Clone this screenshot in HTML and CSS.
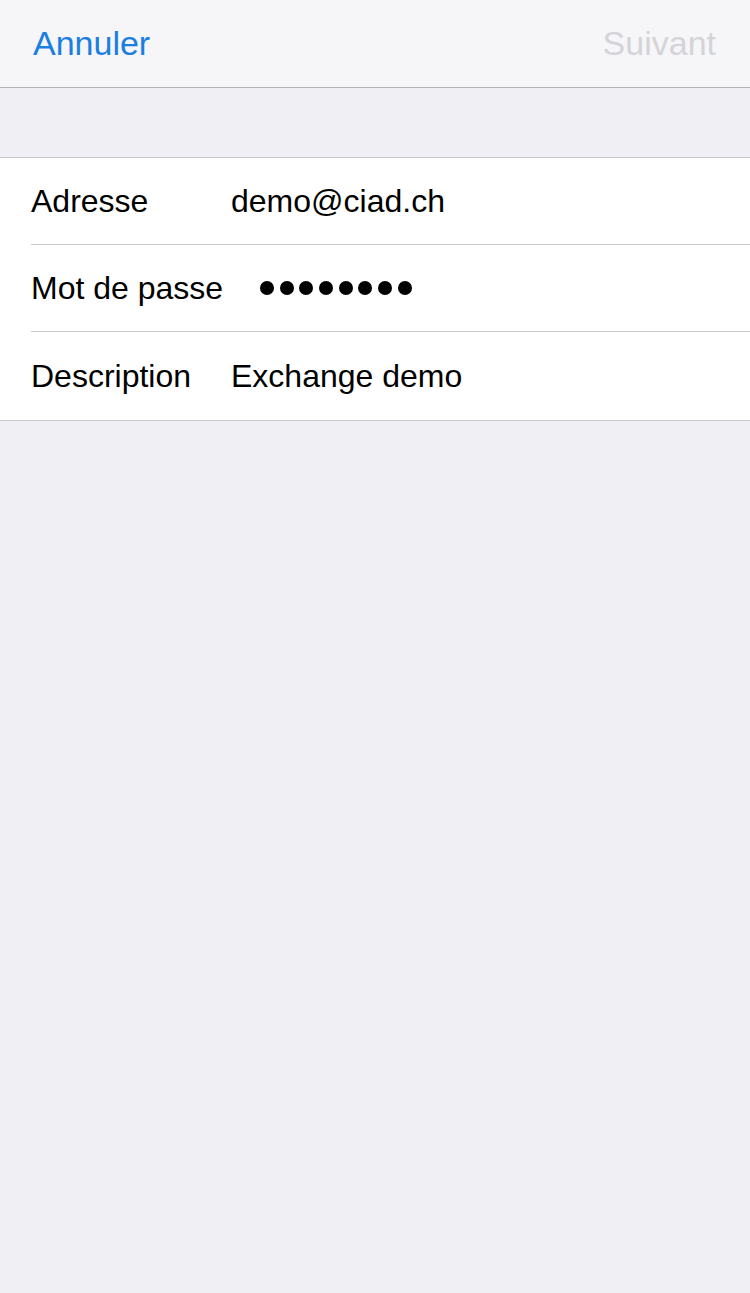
FILE: index.html
```html
<!DOCTYPE html>
<html lang="fr">
<head>
<meta charset="UTF-8">
<meta name="viewport" content="width=device-width, initial-scale=1.0">
<title>Exchange</title>
<link rel="stylesheet" href="styles.css">
</head>
<body>

<div class="navbar">
  <span class="nav-btn cancel">Annuler</span>
  <span class="nav-btn next">Suivant</span>
</div>

<div class="spacer"></div>

<div class="group">
  <div class="row">
    <span class="label">Adresse</span>
    <span class="value">demo@ciad.ch</span>
  </div>
  <div class="row">
    <span class="label">Mot de passe</span>
    <span class="value dots">
      <i></i><i></i><i></i><i></i><i></i><i></i><i></i><i></i>
    </span>
  </div>
  <div class="row last">
    <span class="label">Description</span>
    <span class="value">Exchange demo</span>
  </div>
</div>

</body>
</html>
```

FILE: styles.css
```css
body {
    font-family: "Liberation Sans", Arial, sans-serif;
    background-color: #efeff4;
    margin: 0;
    padding: 0;
    min-height: 100vh;
}

.navbar {
    height: 87px;
    background-color: #f6f6f8;
    border-bottom: 1px solid #b2b2b2;
    display: flex;
    justify-content: space-between;
    align-items: center;
    padding: 0 34px 0 33px;
}

.nav-btn {
    font-size: 34px;
}

.cancel {
    color: #1a7ee2;
}

.next {
    color: #d4d4d8;
}

.spacer {
    height: 69px;
    border-bottom: 1px solid #c8c7cc;
}

.group {
    background-color: #fff;
    border-bottom: 1px solid #c8c7cc;
    padding-left: 31px;
}

.row {
    height: 86px;
    display: flex;
    align-items: center;
    border-bottom: 1px solid #c8c7cc;
    font-size: 32px;
    color: #000;
}

.row.last {
    height: 88px;
    border-bottom: none;
}

.label {
    width: 200px;
}

.dots {
    display: flex;
    gap: 5.7px;
    margin-left: 29px;
}

.dots i {
    width: 14px;
    height: 14px;
    border-radius: 50%;
    background-color: #000;
}
```
